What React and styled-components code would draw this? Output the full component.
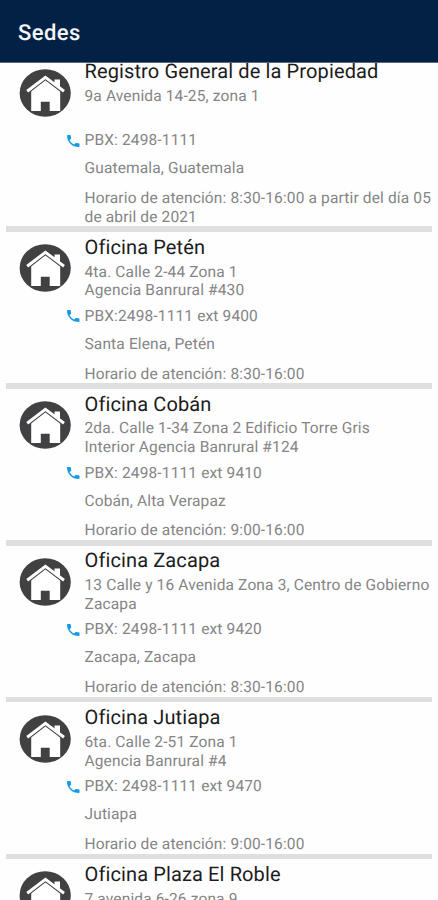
import React from 'react';
import styled, { createGlobalStyle } from 'styled-components';

const GlobalStyle = createGlobalStyle`
  * {
    box-sizing: border-box;
  }
  body {
    margin: 0;
    background: #fff;
    font-family: Roboto, 'Liberation Sans', sans-serif;
    text-rendering: geometricPrecision;
  }
`;

const Screen = styled.div`
  display: flex;
  flex-direction: column;
  height: 900px;
  overflow: hidden;
  background: #fefefe;
`;

const Header = styled.header`
  flex: none;
  display: flex;
  align-items: center;
  height: 63px;
  padding: 5px 18px 0;
  background: #032045;
  border-bottom: 1px solid #59677f;
`;

const HeaderTitle = styled.h1`
  margin: 0;
  color: #f4f6fa;
  font-size: 22px;
  font-weight: 500;
  line-height: 26px;
  letter-spacing: 0.4px;
`;

const Viewport = styled.main`
  flex: 1;
  min-height: 0;
  overflow: hidden;
`;

// the list is scrolled a few pixels under the header
const List = styled.ul`
  list-style: none;
  margin: -6.5px 0 0;
  padding: 0 6px;
`;

const Item = styled.li`
  display: grid;
  grid-template-columns: 78.5px 1fr;
  padding-top: 1.8px;
`;

const Divider = styled.div`
  grid-column: 1 / -1;
  height: 5.5px;
  background: #dfdfdf;
`;

const Badge = styled.svg`
  display: block;
  width: 52px;
  height: 48px;
  margin: 10.4px 0 0 13px;
`;

const Name = styled.h2`
  margin: 0 0 2.8px;
  color: #1c1c1c;
  font-size: 20px;
  font-weight: 400;
  line-height: 26px;
  letter-spacing: 0.12px;
  white-space: nowrap;
`;

const Line = styled.p`
  margin: ${(props) => props.$top || 0}px 0 0;
  min-height: ${(props) => (props.$rows || 1) * 18.7}px;
  color: #858585;
  font-size: 15.5px;
  line-height: 18.7px;
  letter-spacing: 0.14px;
  white-space: pre;
`;

const PhoneRow = styled.div`
  display: flex;
  align-items: center;
  margin: 6.8px 0 0 -17.5px;
`;

const PhoneIcon = styled.svg`
  flex: none;
  width: 12.5px;
  height: 12px;
  margin-right: 5px;
`;

const offices = [
  {
    name: 'Registro General de la Propiedad',
    address: '9a Avenida 14-25, zona 1',
    phone: 'PBX: 2498-1111',
    city: 'Guatemala, Guatemala',
    hours: 'Horario de atención: 8:30-16:00 a partir del día 05\nde abril de 2021',
  },
  {
    name: 'Oficina Petén',
    address: '4ta. Calle 2-44 Zona 1\nAgencia Banrural #430',
    phone: 'PBX:2498-1111 ext 9400',
    city: 'Santa Elena, Petén',
    hours: 'Horario de atención: 8:30-16:00',
  },
  {
    name: 'Oficina Cobán',
    address: '2da. Calle 1-34 Zona 2 Edificio Torre Gris\nInterior Agencia Banrural #124',
    phone: 'PBX: 2498-1111 ext 9410',
    city: 'Cobán, Alta Verapaz',
    hours: 'Horario de atención: 9:00-16:00',
  },
  {
    name: 'Oficina Zacapa',
    address: '13 Calle y 16 Avenida Zona 3, Centro de Gobierno\nZacapa',
    phone: 'PBX: 2498-1111 ext 9420',
    city: 'Zacapa, Zacapa',
    hours: 'Horario de atención: 8:30-16:00',
  },
  {
    name: 'Oficina Jutiapa',
    address: '6ta. Calle 2-51 Zona 1\nAgencia Banrural #4',
    phone: 'PBX: 2498-1111 ext 9470',
    city: 'Jutiapa',
    hours: 'Horario de atención: 9:00-16:00',
  },
  {
    name: 'Oficina Plaza El Roble',
    address: '7 avenida 6-26 zona 9',
  },
];

function House() {
  return (
    <Badge viewBox='0 0 52 48'>
      <ellipse cx='26.2' cy='24' rx='25.6' ry='23.7' fill='#414042' />
      <path d='M12.2 20.5 26.4 9.5 41.2 21V42H30.7v-9.2h-8.9V42h-9.6z' fill='#fff' />
      <path d='M8 23.1 26.4 9l18.8 14.1' fill='none' stroke='#414042' strokeWidth='4' />
      <path d='M35.5 10.5h5.5v9.5l-5.5-4.5z' fill='#fff' />
      <path d='M8.2 22.2 26.4 8.3l18.6 13.9' fill='none' stroke='#fff' strokeWidth='3' />
    </Badge>
  );
}

function Phone() {
  return (
    <PhoneIcon viewBox='3 3 18 18' preserveAspectRatio='none'>
      <path
        fill='#149be3'
        d='M6.62 10.79c1.44 2.83 3.76 5.14 6.59 6.59l2.2-2.2c.27-.27.67-.36 1.02-.24 1.12.37 2.33.57 3.57.57.55 0 1 .45 1 1V20c0 .55-.45 1-1 1-9.39 0-17-7.61-17-17 0-.55.45-1 1-1h3.5c.55 0 1 .45 1 1 0 1.25.2 2.45.57 3.57.11.35.03.74-.25 1.02l-2.2 2.2z'
      />
    </PhoneIcon>
  );
}

function Office({ office }) {
  return (
    <Item>
      <House />
      <div>
        <Name>{office.name}</Name>
        <Line $rows={2}>{office.address}</Line>
        {office.phone && (
          <PhoneRow>
            <Phone />
            <Line>{office.phone}</Line>
          </PhoneRow>
        )}
        {office.city && <Line $top={9.4}>{office.city}</Line>}
        {office.hours && <Line $top={11}>{office.hours}</Line>}
      </div>
      <Divider />
    </Item>
  );
}

export default function App() {
  return (
    <>
      <GlobalStyle />
      <Screen>
        <Header>
          <HeaderTitle>Sedes</HeaderTitle>
        </Header>
        <Viewport>
          <List>
            {offices.map((office) => (
              <Office key={office.name} office={office} />
            ))}
          </List>
        </Viewport>
      </Screen>
    </>
  );
}
